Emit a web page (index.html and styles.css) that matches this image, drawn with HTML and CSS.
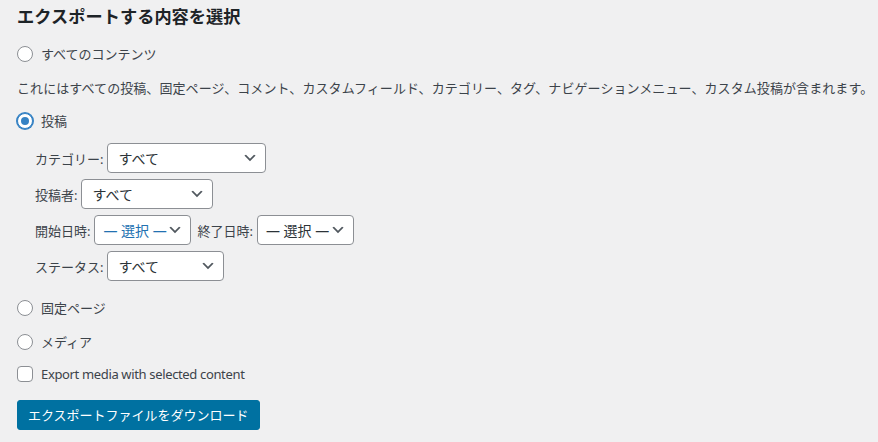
FILE: index.html
```html
<!DOCTYPE html>
<html lang="ja">
<head>
<meta charset="utf-8">
<link rel="stylesheet" href="styles.css">
</head>
<body>
<div class="wrap">
  <h2 class="title">エクスポートする内容を選択</h2>
  <div class="opt row1"><span class="radio"></span><span>すべてのコンテンツ</span></div>
  <p class="desc">これにはすべての投稿、固定ページ、コメント、カスタムフィールド、カテゴリー、タグ、ナビゲーションメニュー、カスタム投稿が含まれます。</p>
  <div class="opt row2"><span class="radio checked"></span><span>投稿</span></div>
  <ul class="filters">
    <li><span class="lbl">カテゴリー:</span><span class="select w-cat"><span>すべて</span><svg class="chev" viewBox="0 0 20 20"><path d="M5 6l5 5 5-5 2 1-7 7-7-7 2-1z"/></svg></span></li>
    <li><span class="lbl">投稿者:</span><span class="select w-author"><span>すべて</span><svg class="chev" viewBox="0 0 20 20"><path d="M5 6l5 5 5-5 2 1-7 7-7-7 2-1z"/></svg></span></li>
    <li><span class="lbl">開始日時:</span><span class="select w-date focus"><span>— 選択 —</span><svg class="chev" viewBox="0 0 20 20"><path d="M5 6l5 5 5-5 2 1-7 7-7-7 2-1z"/></svg></span><span class="lbl lbl-end">終了日時:</span><span class="select w-date"><span>— 選択 —</span><svg class="chev" viewBox="0 0 20 20"><path d="M5 6l5 5 5-5 2 1-7 7-7-7 2-1z"/></svg></span></li>
    <li><span class="lbl">ステータス:</span><span class="select w-status"><span>すべて</span><svg class="chev" viewBox="0 0 20 20"><path d="M5 6l5 5 5-5 2 1-7 7-7-7 2-1z"/></svg></span></li>
  </ul>
  <div class="opt row3"><span class="radio"></span><span>固定ページ</span></div>
  <div class="opt row4"><span class="radio"></span><span>メディア</span></div>
  <div class="opt row5"><span class="checkbox"></span><span class="latin">Export media with selected content</span></div>
  <div class="submit"><button class="button">エクスポートファイルをダウンロード</button></div>
</div>
</body>
</html>
```
FILE: styles.css
```css
html, body {
  margin: 0;
  padding: 0;
  background: #f0f0f1;
}
body {
  font-family: "Noto Sans", "Noto Sans CJK JP", sans-serif;
  font-size: 13px;
  color: #3c434a;
}
.wrap {
  padding: 0 17px;
}
.title {
  margin: 5px 0 0;
  font-size: 17.2px;
  line-height: 24px;
  font-weight: 700;
  color: #1d2327;
  letter-spacing: 0.05px;
}
.opt {
  display: flex;
  align-items: center;
  height: 20px;
  line-height: 20px;
}
.row1 { margin-top: 15px; }
.row2 { margin-top: 13px; }
.row3 { margin-top: 17px; }
.row4 { margin-top: 14px; }
.row5 { margin-top: 12px; }
.desc {
  margin: 14px 0 0;
  line-height: 20px;
  white-space: nowrap;
  letter-spacing: 0.08px;
}
.radio, .checkbox {
  box-sizing: border-box;
  width: 16px;
  height: 16px;
  border: 1px solid #8c8f94;
  background: #fff;
  margin-right: 8px;
  flex: none;
}
.radio {
  border-radius: 50%;
  position: relative;
}
.checkbox {
  border-radius: 4px;
}
.radio.checked {
  border-color: #3582c4;
  box-shadow: 0 0 0 1px #3582c4;
}
.radio.checked::before {
  content: "";
  position: absolute;
  left: 3px;
  top: 3px;
  width: 8px;
  height: 8px;
  border-radius: 50%;
  background: #3582c4;
}
.latin {
  font-family: "Noto Sans", sans-serif;
  letter-spacing: -0.35px;
}
.filters {
  list-style: none;
  margin: 12px 0 0 18px;
  padding: 0;
  display: flex;
  flex-direction: column;
  gap: 6px;
}
.filters li {
  display: flex;
  align-items: center;
  height: 30px;
}
.lbl {
  margin-right: 4px;
}
.lbl-end {
  margin-left: 6px;
}
.select {
  box-sizing: border-box;
  display: flex;
  align-items: center;
  justify-content: space-between;
  height: 30px;
  padding: 0 7px 0 10px;
  border: 1px solid #8c8f94;
  border-radius: 4px;
  background: #fff;
  color: #2c3338;
  font-size: 14px;
}
.select.focus {
  color: #2271b1;
  padding-left: 8px;
}
.w-cat { width: 159px; }
.w-author { width: 132px; }
.w-date { width: 97px; padding-left: 8px; }
.w-status { width: 117px; }
.chev {
  width: 16px;
  height: 16px;
  fill: #50575e;
  flex: none;
}
.submit {
  margin-top: 16px;
}
.button {
  box-sizing: border-box;
  height: 30px;
  padding: 0 10px;
  border: 1px solid #0071a1;
  border-radius: 3px;
  background: #0071a1;
  color: #fff;
  font-family: "Noto Sans", "Noto Sans CJK JP", sans-serif;
  font-size: 13px;
  line-height: 28px;
  cursor: pointer;
}
```
